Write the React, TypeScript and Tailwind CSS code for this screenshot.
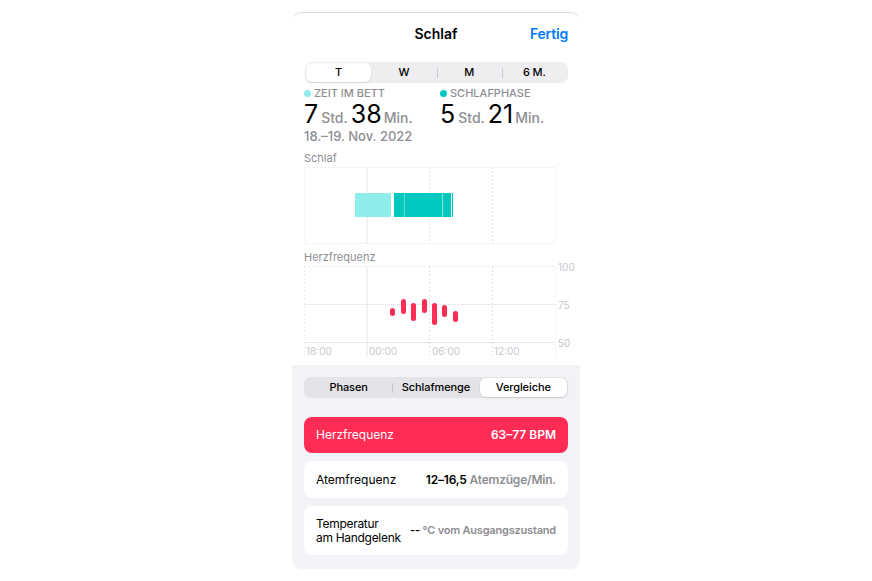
import React from "react";

const font = { fontFamily: "Inter, 'Noto Sans', sans-serif" };

function Segmented({
  items,
  selected,
  dark,
}: {
  items: string[];
  selected: number;
  dark?: boolean;
}) {
  return (
    <div
      className={`flex h-[21px] items-stretch rounded-[7px] p-[1px] ${
        dark ? "bg-[#e3e3e8]" : "bg-[#eeeef0]"
      }`}
    >
      {items.map((it, i) => {
        const showSep = i > 0 && i !== selected && i - 1 !== selected;
        return (
          <div key={it} className="relative flex flex-1 items-center justify-center">
            {showSep && (
              <span className="absolute left-0 top-[5px] h-[10px] w-px bg-[#c7c7cc]" />
            )}
            <div
              className={`flex h-full w-full items-center justify-center rounded-[6px] text-[11px] font-medium tracking-[-0.1px] text-black ${
                i === selected ? "bg-white shadow-[0_1px_2px_rgba(0,0,0,0.12)]" : ""
              }`}
            >
              {it}
            </div>
          </div>
        );
      })}
    </div>
  );
}

function Stat({
  label,
  dot,
  h,
  m,
}: {
  label: string;
  dot: string;
  h: string;
  m: string;
}) {
  return (
    <div>
      <div className="flex h-[14px] items-center gap-[3px] text-[11px] font-medium leading-[14px] text-[#8e8e93]">
        <span className="h-[7px] w-[7px] rounded-full" style={{ background: dot }} />
        {label}
      </div>
      <div className="mt-px flex h-[26px] items-baseline leading-[26px] text-black">
        <span className="text-[25px] font-normal">{h}</span>
        <span className="ml-[3px] mr-[3px] text-[14px] font-medium text-[#8e8e93]">Std.</span>
        <span className="text-[25px] font-normal">{m}</span>
        <span className="ml-[2px] text-[14px] font-medium text-[#8e8e93]">Min.</span>
      </div>
    </div>
  );
}

function SleepChart() {
  return (
    <svg width="264" height="77" className="block">
      <rect x="0.5" y="0.5" width="251" height="76" fill="none" stroke="#ececef" strokeDasharray="2 2" />
      <line x1="63" y1="0" x2="63" y2="77" stroke="#e5e5ea" />
      <line x1="125.5" y1="0" x2="125.5" y2="77" stroke="#e0e0e5" strokeDasharray="2 2" />
      <line x1="188.5" y1="0" x2="188.5" y2="77" stroke="#e0e0e5" strokeDasharray="2 2" />
      <rect x="51" y="26" width="36" height="24" fill="#8eecea" />
      <rect x="90" y="26" width="59" height="24" fill="#00c8bf" />
      <line x1="100.5" y1="26" x2="100.5" y2="50" stroke="#5fdcd6" />
      <line x1="138.5" y1="26" x2="138.5" y2="50" stroke="#7fe4df" />
      <line x1="147.5" y1="26" x2="147.5" y2="50" stroke="#dffaf8" />
    </svg>
  );
}

const hrBars = [
  [86, 45, 53],
  [97, 36, 51],
  [107, 40, 58],
  [118, 36, 50],
  [128, 40, 62],
  [138, 42, 54],
  [149, 48, 59],
];

function HeartChart() {
  const grey = "#c7c7cc";
  return (
    <svg width="274" height="96" className="block overflow-visible">
      <line x1="0" y1="3.5" x2="251" y2="3.5" stroke="#ececef" strokeDasharray="2 2" />
      <line x1="0" y1="41.5" x2="251" y2="41.5" stroke="#ececef" />
      <line x1="0" y1="79.5" x2="251" y2="79.5" stroke="#e5e5ea" />
      <line x1="0.5" y1="3" x2="0.5" y2="94" stroke="#ececef" strokeDasharray="2 2" />
      <line x1="63" y1="3" x2="63" y2="94" stroke="#e5e5ea" />
      <line x1="125.5" y1="3" x2="125.5" y2="94" stroke="#e0e0e5" strokeDasharray="2 2" />
      <line x1="188.5" y1="3" x2="188.5" y2="94" stroke="#e0e0e5" strokeDasharray="2 2" />
      <line x1="251.5" y1="3" x2="251.5" y2="94" stroke="#ececef" strokeDasharray="1 2" />
      {hrBars.map(([x, y1, y2]) => (
        <rect key={x} x={x} y={y1} width="5" height={y2 - y1} rx="2.5" fill="#ff2d55" />
      ))}
      <g fill={grey} fontSize="10" style={font}>
        <text x="254" y="7.5">100</text>
        <text x="254" y="45.5">75</text>
        <text x="254" y="83.5">50</text>
        <text x="2" y="91.5">18:00</text>
        <text x="65" y="91.5">00:00</text>
        <text x="128" y="91.5">06:00</text>
        <text x="190" y="91.5">12:00</text>
      </g>
    </svg>
  );
}

export default function App() {
  return (
    <div className="flex h-[581px] w-full justify-center bg-white" style={font}>
      <div className="mt-[12px] flex h-[557px] w-[288px] flex-col rounded-[10px] border-t border-[#d6d6da]">
        <div className="rounded-t-[10px] bg-white pl-[12px]">
          <div className="relative mr-[12px] flex h-[41px] items-center justify-center">
            <span className="text-[14px] font-semibold text-black">Schlaf</span>
            <span className="absolute right-0 text-[14px] font-semibold tracking-[-0.2px] text-[#007aff]">
              Fertig
            </span>
          </div>
          <div className="mr-[12px] mt-[8px] pl-px">
            <Segmented items={["T", "W", "M", "6 M."]} selected={0} />
          </div>
          <div className="mt-[3px] flex">
            <div className="w-[136px]">
              <Stat label="ZEIT IM BETT" dot="#8eecea" h="7" m="38" />
            </div>
            <Stat label="SCHLAFPHASE" dot="#00c8bf" h="5" m="21" />
          </div>
          <div className="mt-px h-[16px] text-[13px] font-medium leading-[16px] text-[#8e8e93]">
            18.–19. Nov. 2022
          </div>
          <div className="mt-[8px] h-[13px] text-[11px] leading-[13px] text-[#8e8e93]">Schlaf</div>
          <div className="mt-[2px]">
            <SleepChart />
          </div>
          <div className="mt-[7px] h-[12px] text-[11px] leading-[12px] text-[#8e8e93]">Herzfrequenz</div>
          <div className="h-[102px]">
            <HeartChart />
          </div>
        </div>
        <div className="flex flex-1 flex-col rounded-b-[10px] bg-[#f2f2f7] px-[12px] pt-[12px]">
          <Segmented items={["Phasen", "Schlafmenge", "Vergleiche"]} selected={2} dark />
          <div className="mt-[19px] flex h-[36px] items-center justify-between rounded-[8px] bg-[#ff2d55] px-[12px] text-[12px] text-white">
            <span>Herzfrequenz</span>
            <span className="font-semibold">63–77 BPM</span>
          </div>
          <div className="mt-[8px] flex h-[37px] items-center justify-between rounded-[8px] bg-white px-[12px] text-[12px] text-black">
            <span>Atemfrequenz</span>
            <span className="whitespace-nowrap font-semibold tracking-[-0.2px]">
              12–16,5 <span className="text-[#8e8e93]">Atemzüge/Min.</span>
            </span>
          </div>
          <div className="mt-[8px] flex h-[49px] items-center justify-between gap-[4px] rounded-[8px] bg-white px-[12px] text-[12px] text-black">
            <span className="shrink-0 whitespace-nowrap leading-[14px] tracking-[-0.3px]">
              Temperatur
              <br />
              am Handgelenk
            </span>
            <span className="whitespace-nowrap text-[11px] font-semibold tracking-[-0.2px]">
              -- <span className="text-[#8e8e93]">°C vom Ausgangszustand</span>
            </span>
          </div>
        </div>
      </div>
    </div>
  );
}
